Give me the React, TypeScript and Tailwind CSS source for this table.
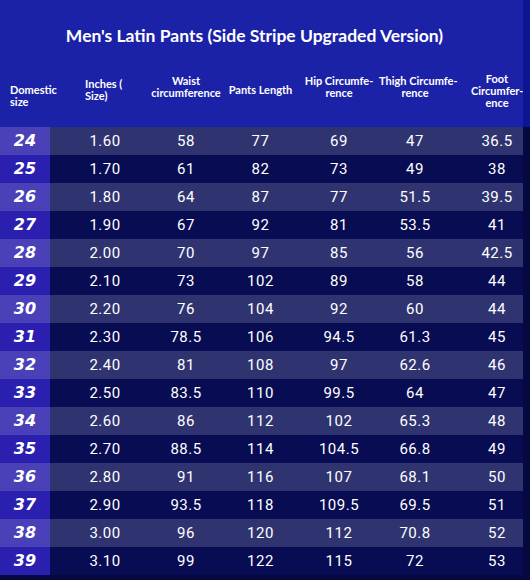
const rows = [
  ["24", "1.60", "58", "77", "69", "47", "36.5"],
  ["25", "1.70", "61", "82", "73", "49", "38"],
  ["26", "1.80", "64", "87", "77", "51.5", "39.5"],
  ["27", "1.90", "67", "92", "81", "53.5", "41"],
  ["28", "2.00", "70", "97", "85", "56", "42.5"],
  ["29", "2.10", "73", "102", "89", "58", "44"],
  ["30", "2.20", "76", "104", "92", "60", "44"],
  ["31", "2.30", "78.5", "106", "94.5", "61.3", "45"],
  ["32", "2.40", "81", "108", "97", "62.6", "46"],
  ["33", "2.50", "83.5", "110", "99.5", "64", "47"],
  ["34", "2.60", "86", "112", "102", "65.3", "48"],
  ["35", "2.70", "88.5", "114", "104.5", "66.8", "49"],
  ["36", "2.80", "91", "116", "107", "68.1", "50"],
  ["37", "2.90", "93.5", "118", "109.5", "69.5", "51"],
  ["38", "3.00", "96", "120", "112", "70.8", "52"],
  ["39", "3.10", "99", "122", "115", "72", "53"],
];

const grid = "grid grid-cols-[50px_100px_72px_77px_80px_72px_72px]";

const App = () => {
  return (
    <div className="w-[530px] h-[580px] overflow-hidden bg-[#05093f] font-['Lato',sans-serif]">
      {/* En-tête */}
      <div className="flex h-[127px]">
        <div className="w-[523px] bg-[#1b22a8] text-white">
          <h1 className="pt-[24px] pr-[14px] text-center text-[17.5px] font-bold leading-[24px]">
            Men's Latin Pants (Side Stripe Upgraded Version)
          </h1>
          <div className={`${grid} mt-[22px] h-[40px] items-center text-[11px] font-bold leading-[12px] whitespace-nowrap`}>
            <div className="pl-[10px] pt-[12px]">Domestic<br />size</div>
            <div className="pl-[35px]">Inches (<br />Size)</div>
            <div className="text-center -mt-[6px]">Waist<br />circumference</div>
            <div className="text-center">Pants Length</div>
            <div className="text-center -mt-[6px]">Hip Circumfe-<br />rence</div>
            <div className="text-center -mt-[6px]">Thigh Circumfe-<br />rence</div>
            <div className="text-center pl-[20px] pt-[2px]">Foot<br />Circumfer-<br />ence</div>
          </div>
        </div>
        <div className="flex-1 bg-[#0f1590]" />
      </div>

      {/* Lignes */}
      <div className="w-[523px]">
        {rows.map((r, i) => {
          const light = i % 2 === 0;
          return (
            <div key={r[0]} className={`${grid} h-[28px] items-center ${light ? "bg-[#2f3471]" : "bg-[#080c52]"}`}>
              <div className={`h-full flex items-center justify-center font-['DejaVu_Sans',sans-serif] font-bold italic text-[16px] text-white ${light ? "bg-[#4a40b8]" : "bg-[#2a1fae]"}`}>
                {r[0]}
              </div>
              {r.slice(1).map((v, j) => (
                <div
                  key={j}
                  className={`text-center font-['Roboto',sans-serif] text-[15px] tracking-[0.5px] text-white ${j === 0 ? "pl-[10px]" : ""} ${j === 5 ? "pl-[20px]" : ""}`}
                >
                  {v}
                </div>
              ))}
            </div>
          );
        })}
      </div>
    </div>
  );
};

export default App;
